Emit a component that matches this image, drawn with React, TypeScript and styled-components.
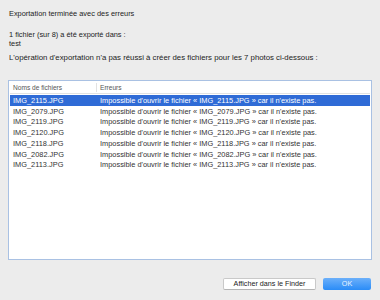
import styled, { createGlobalStyle } from 'styled-components'

const GlobalStyle = createGlobalStyle`
  html, body {
    margin: 0;
    padding: 0;
    background: #ececec;
  }
  body {
    font-family: "Liberation Sans", Arial, sans-serif;
    color: #222;
  }
`

const files = ['2115', '2079', '2119', '2120', '2118', '2082', '2113']

const App: React.FC = () => {
  return (
    <Dialog>
      <GlobalStyle />
      <Title>Exportation terminée avec des erreurs</Title>
      <Info>
        <Line>1 fichier (sur 8) a été exporté dans :</Line>
        <Line>test</Line>
      </Info>
      <Message>
        L'opération d'exportation n'a pas réussi à créer des fichiers pour les 7
        photos ci-dessous :
      </Message>
      <Table>
        <HeaderRow>
          <NameCell>Noms de fichiers</NameCell>
          <HeaderError>Erreurs</HeaderError>
        </HeaderRow>
        {files.map((n, i) => (
          <Row key={n} selected={i === 0}>
            <NameCell>IMG_{n}.JPG</NameCell>
            <ErrorCell>
              Impossible d'ouvrir le fichier « IMG_{n}.JPG » car il n'existe pas.
            </ErrorCell>
          </Row>
        ))}
      </Table>
      <Footer>
        <Button>Afficher dans le Finder</Button>
        <PrimaryButton>OK</PrimaryButton>
      </Footer>
    </Dialog>
  )
}

export default App

const Dialog = styled.div`
  width: 380px;
  height: 300px;
  box-sizing: border-box;
  padding: 9px 8px 0 8px;
  display: flex;
  flex-direction: column;
  font-size: 7.4px;
`

const Title = styled.div`
  line-height: 10px;
  padding-left: 1px;
`

const Info = styled.div`
  margin-top: 11px;
  padding-left: 1px;
`

const Line = styled.div`
  line-height: 9px;
`

const Message = styled.div`
  margin-top: 5px;
  line-height: 10px;
  padding-left: 1px;
  font-size: 7.8px;
`

const Table = styled.div`
  margin-top: 17px;
  height: 180px;
  box-sizing: border-box;
  border: 1.5px solid #a9c1e3;
  background: #fff;
  display: flex;
  flex-direction: column;
  padding: 0 1px;
`

const HeaderRow = styled.div`
  display: flex;
  height: 12px;
  align-items: center;
  border-bottom: 1px solid #e2e2e2;
  color: #555;
  font-size: 6.6px;
  margin-bottom: 1px;
`

const Row = styled.div<{ selected?: boolean }>`
  display: flex;
  height: 10.75px;
  align-items: center;
  background: ${({ selected }) => (selected ? '#2f6bd6' : 'transparent')};
  color: ${({ selected }) => (selected ? '#fff' : '#333')};
`

const NameCell = styled.div`
  width: 86px;
  padding-left: 3px;
  box-sizing: border-box;
  flex-shrink: 0;
`

const HeaderError = styled.div`
  border-left: 1px solid #e2e2e2;
  padding-left: 3px;
  line-height: 9px;
`

const ErrorCell = styled.div`
  padding-left: 4px;
`

const Footer = styled.div`
  display: flex;
  justify-content: flex-end;
  gap: 7px;
  margin-top: 18px;
  padding-right: 1px;
`

const Button = styled.div`
  width: 93px;
  height: 12px;
  box-sizing: border-box;
  background: #fff;
  border: 1px solid #c9c9c9;
  border-bottom-color: #b4b4b4;
  border-radius: 2px;
  font-size: 7.2px;
  line-height: 10px;
  text-align: center;
  color: #222;
`

const PrimaryButton = styled.div`
  width: 48px;
  height: 12px;
  box-sizing: border-box;
  background: linear-gradient(#6cb0fa, #2a8cf7);
  border-radius: 2px;
  font-size: 7.2px;
  line-height: 12px;
  text-align: center;
  color: #eaf3ff;
`
